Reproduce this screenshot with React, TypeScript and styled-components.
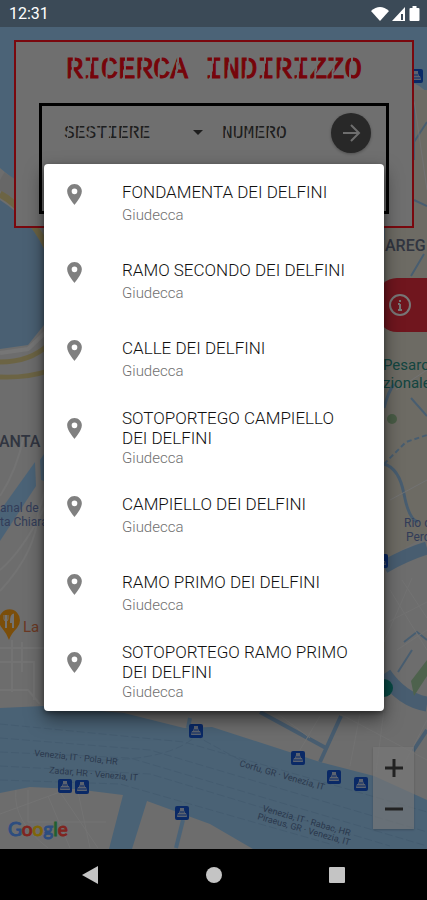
import React from "react";
import styled, { createGlobalStyle, css } from "styled-components";

const GlobalStyle = createGlobalStyle`
  *, *::before, *::after { box-sizing: border-box; }
  body { margin: 0; background: #000; font-family: Roboto, "Liberation Sans", sans-serif; }
  button, input, select { font: inherit; color: inherit; border: 0; padding: 0; margin: 0; background: none; border-radius: 0; }
`;

const Screen = styled.div`
  display: flex;
  flex-direction: column;
  min-height: 100vh;
`;

const StatusBar = styled.header`
  display: flex;
  align-items: center;
  justify-content: space-between;
  height: 27px;
  padding: 0 7px 0 9px;
  background: #3b4a57;
  color: #fff;
  font-size: 16px;
  line-height: 20px;
`;

const StatusIcons = styled.div`
  display: flex;
  align-items: center;
  gap: 2px;
  svg { display: block; }
`;

const Stage = styled.main`
  position: relative;
  display: grid;
  flex: 1;
  overflow: hidden;
`;

const MapLayer = styled.div`
  position: absolute;
  inset: 0;
  svg { display: block; width: 100%; height: 100%; }
`;

const Controls = styled.div`
  grid-area: 1 / 1;
  position: relative;
  display: flex;
  flex-direction: column;
  padding: 13px 13px 0 14px;
`;

const SearchPanel = styled.section`
  display: flex;
  flex-direction: column;
  height: 188px;
  padding: 13px 23px 12px 23px;
  border: 2px solid #f4101c;
  background: #dedede;
`;

const stencil = css`
  position: relative;
  font-family: "Liberation Mono", monospace;
  &::after {
    content: "";
    position: absolute;
    inset: 0;
    pointer-events: none;
    background-image: linear-gradient(97deg, transparent 33%, #dedede 34%, #dedede 43%, transparent 44%);
    background-size: 1ch 100%;
  }
`;

const Title = styled.h1`
  ${stencil}
  align-self: center;
  margin: 0;
  color: #ec0814;
  font-size: 29px;
  font-weight: 400;
  line-height: 32px;
  white-space: nowrap;
  -webkit-text-stroke: 1px #ec0814;
`;

const SearchForm = styled.form`
  display: flex;
  align-items: flex-start;
  flex: 1;
  margin-top: 16px;
  padding: 7px 15px 0 22px;
  border: 3px solid #000;
`;

const StencilField = styled.label<{ $grow?: boolean }>`
  ${stencil}
  display: block;
  flex: ${(p) => (p.$grow ? "1 1 0" : "0 1 88px")};
  min-width: 0;
  margin-top: 8px;
  color: #3c3c3c;
  font-size: 18px;
  line-height: 24px;
`;

const District = styled.select`
  display: block;
  width: 100%;
  height: 24px;
  appearance: none;
  outline: 0;
`;

const HouseNumber = styled.input`
  display: block;
  width: 100%;
  height: 24px;
  outline: 0;
  &::placeholder { color: #3c3c3c; opacity: 1; }
`;

const Caret = styled.svg`
  flex: none;
  margin: 17px 19px 0 41px;
`;

const GoButton = styled.button`
  display: grid;
  place-items: center;
  flex: none;
  width: 40px;
  height: 40px;
  border-radius: 50%;
  background: #505050;
  box-shadow: 0 1px 3px rgba(0, 0, 0, 0.3);
`;

const InfoTab = styled.button`
  display: flex;
  align-items: center;
  align-self: flex-end;
  width: 50px;
  height: 54px;
  margin: 50px -13px 0 0;
  padding-left: 11px;
  border-radius: 20px 0 0 20px;
  background: #e02c3c;
`;

const MapFooter = styled.div`
  display: flex;
  align-items: flex-end;
  justify-content: space-between;
  margin-top: auto;
  margin-left: -6px;
  padding-bottom: 8px;
`;

const Brand = styled.a`
  font-family: Lato, sans-serif;
  font-size: 19px;
  font-weight: 400;
  line-height: 24px;
  text-decoration: none;
`;

const Letter = styled.span<{ $tone: string }>`
  color: ${(p) => p.$tone};
  -webkit-text-stroke: 1px ${(p) => p.$tone};
`;

const ZoomGroup = styled.div`
  display: flex;
  flex-direction: column;
  width: 41px;
  margin-bottom: 12px;
  background: rgba(240, 240, 240, 0.65);
  box-shadow: 0 1px 2px rgba(0, 0, 0, 0.2);
`;

const ZoomButton = styled.button`
  display: grid;
  place-items: center;
  height: 41px;
`;

const Scrim = styled.div`
  grid-area: 1 / 1;
  position: relative;
  display: grid;
  align-items: center;
  padding: 0 43px 1px 44px;
  background: rgba(0, 0, 0, 0.5);
`;

const Dialog = styled.div`
  padding-bottom: 1px;
  border-radius: 4px;
  background: #fff;
  box-shadow: 0 8px 18px rgba(0, 0, 0, 0.5), 0 2px 5px rgba(0, 0, 0, 0.35);
`;

const ResultList = styled.ul`
  margin: 0;
  padding: 0;
  list-style: none;
`;

const ResultButton = styled.button<{ $tall: boolean }>`
  display: flex;
  align-items: flex-start;
  width: 100%;
  min-height: 78px;
  padding: ${(p) => (p.$tall ? "10px" : "18px")} 24px 0 23px;
  text-align: left;
  svg { flex: none; margin-top: ${(p) => (p.$tall ? "10px" : "2px")}; }
`;

const ResultText = styled.span<{ $tall: boolean }>`
  display: flex;
  flex-direction: column;
  gap: ${(p) => (p.$tall ? "0" : "3px")};
  margin-left: 40px;
`;

const Street = styled.span`
  color: #101010;
  font-size: 17px;
  font-weight: 300;
  line-height: 20px;
`;

const Area = styled.span`
  color: #707070;
  font-size: 15px;
  font-weight: 300;
  line-height: 20px;
`;

const NavBar = styled.nav`
  display: grid;
  grid-template-columns: 1fr 1fr 1fr;
  justify-items: center;
  align-items: center;
  height: 51px;
  padding: 0 29px;
  background: #000;
`;

const NavButton = styled.button`
  display: grid;
  place-items: center;
  width: 40px;
  height: 40px;
`;

const results = [
  "FONDAMENTA DEI DELFINI",
  "RAMO SECONDO DEI DELFINI",
  "CALLE DEI DELFINI",
  "SOTOPORTEGO CAMPIELLO DEI DELFINI",
  "CAMPIELLO DEI DELFINI",
  "RAMO PRIMO DEI DELFINI",
  "SOTOPORTEGO RAMO PRIMO DEI DELFINI",
];

const ferryStops = [
  [196, 731], [65, 786], [82, 787], [182, 813], [298, 758], [334, 777], [361, 784], [416, 76], [381, 561],
];

const brand: [string, string][] = [
  ["G", "#5b9bff"], ["o", "#ff4a40"], ["o", "#ffcc10"], ["g", "#5b9bff"], ["l", "#40c060"], ["e", "#ff4a40"],
];

const Pin = () => (
  <svg width="15" height="21" viewBox="5 2 14 20" fill="#808080" aria-hidden="true">
    <path fillRule="evenodd" d="M12 2C8.1 2 5 5.1 5 9c0 5.200 7 13 7 13s7-7.800 7-13c0-3.900-3.100-7-7-7zm0 9.700a2.700 2.700 0 1 1 0-5.400 2.700 2.700 0 0 1 0 5.400z" />
  </svg>
);

const Ferry = ({ x, y }: { x: number; y: number }) => (
  <g transform={`translate(${x - 7} ${y - 7})`}>
    <rect width="14" height="14" rx="2" fill="#1452cc" />
    <path d="M5 2h4v2l1 3h1l1 4H2l1-4h1l1-3z" fill="#b8c6e0" />
    <path d="M5 6h4M3 9h8" stroke="#1452cc" strokeWidth="1" />
  </g>
);

const CityMap = () => (
  <svg viewBox="0 27 427 822" preserveAspectRatio="xMidYMid slice" fontFamily="Roboto, sans-serif" aria-label="Venezia">
    <rect y="27" width="427" height="822" fill="#dadada" />
    <path d="M0 27H427V92Q410 76 390 80V240H50Q35 195 0 168Z" fill="#97c7ef" />
    <path d="M0 180Q36 200 60 270" fill="none" stroke="#cfcfcf" strokeWidth="18" />
    <path d="M0 194Q30 210 54 262" fill="none" stroke="#d9c988" strokeWidth="7" />
    <path d="M0 200Q37 224 48 260V320L28 345 0 349Z" fill="#94c1e7" />
    <path d="M0 353L28 349 48 330" fill="none" stroke="#ececec" strokeWidth="4" />
    <path d="M0 362Q30 362 48 345M0 377Q27 378 48 371" fill="none" stroke="#d9c988" strokeWidth="5" />
    <path d="M0 511L35 462 36 486 0 541Z" fill="#97c7ef" />
    <path d="M40 460L48 448V482L41 480Z" fill="#97c7ef" />
    <g fill="none" stroke="#e6e6e6" strokeWidth="2">
      <path d="M0 496Q17 470 24 435M0 591Q36 552 38 514L48 480M0 570Q24 550 48 500" />
      <path d="M0 662H34V700M12 640V692M0 690H28L40 704M22 642V672M0 648H48" />
      <path d="M16 790Q12 820 48 848M0 814L60 792 98 848M28 790V822H106M48 796L70 848M78 792L90 848" strokeWidth="1" />
    </g>
    <path d="M385 90H427V580L384 650Z" fill="#dad6c9" />
    <path d="M385 560L427 535V720H385Z" fill="#dadada" />
    <g fill="none" stroke="#90bbe0" strokeWidth="3">
      <path d="M414 200L427 206M427 122L414 142M424 254L411 276M414 160V100" strokeWidth="2" />
      <path d="M384 464Q399 468 404 494T418 522M384 408Q388 392 394 384" />
      <path d="M411 398L427 416" strokeWidth="2" />
      <path d="M384 464L406 442 427 435" strokeWidth="2" strokeDasharray="5 3" />
      <path d="M384 567Q407 554 427 548" strokeWidth="13" />
      <path d="M384 674Q402 700 427 704" strokeWidth="15" />
      <path d="M260 712L326 748M341 716L320 762M427 730L413 751" strokeWidth="4" />
      <path d="M404 642L417 632 427 640M398 672L412 650" strokeWidth="2" />
    </g>
    <g fill="none" stroke="#e4e4e4" strokeWidth="1">
      <path d="M390 590L427 650M402 580L427 618M388 622L427 602M384 642L412 578M397 650L427 630M396 390L427 370M390 500L427 480M414 100L427 190" />
      <path d="M340 714L427 760M360 714L350 766M384 710L376 772M320 716L300 750M427 720L398 776M278 714L310 738" />
    </g>
    <circle cx="392" cy="419" r="5" fill="#93b98c" />
    <path d="M411 681L427 660V676L414 696Z" fill="#9cc49a" />
    <circle cx="384" cy="688" r="9" fill="#11958a" />
    <path d="M0 708L44 706 124 713 184 728 212 727 320 762 374 776 427 800V849H253L210 824 147 801 132 849H109L123 795 75 789 30 787 0 793Z" fill="#94c4eb" />
    <g fill="none" stroke="#89b8df" strokeWidth="1" strokeDasharray="8 3">
      <path d="M0 724L184 742 427 812M0 738L150 750 427 832M0 752L130 758 427 846M0 766L150 774 390 846M0 780L120 784 330 844M100 760Q170 760 196 736L240 760" />
    </g>
    <path d="M190 718L188 728M183 820L176 848" stroke="#97c7ef" strokeWidth="4" />
    <g fill="#54729a" fontSize="9">
      <text transform="translate(34 756) rotate(6)">Venezia, IT · Pola, HR</text>
      <text transform="translate(49 773) rotate(5)">Zadar, HR · Venezia, IT</text>
      <text transform="translate(239 766) rotate(16)">Corfu, GR · Venezia, IT</text>
      <text transform="translate(262 811) rotate(16)">Venezia, IT · Rabac, HR</text>
      <text transform="translate(257 819) rotate(16)">Piraeus, GR · Venezia, IT</text>
    </g>
    <g fill="#626b80" fontSize="16" fontWeight="500">
      <text x="-1" y="447">ANTA</text>
      <text x="385" y="251">AREG</text>
    </g>
    <g fill="#6579b1" fontSize="12">
      <text x="0" y="512">anal de</text>
      <text x="0" y="526">ta Chiara</text>
      <text x="404" y="527">Rio di</text>
      <text x="406" y="541">Perdon</text>
    </g>
    <g fill="#268a80" fontSize="15">
      <text x="383" y="370">Pesaro</text>
      <text x="383" y="388">zionale</text>
    </g>
    <path d="M9 640Q7 634 2 628A10.500 11 0 1 1 17 628Q11 634 9 640Z" fill="#f79c15" />
    <path d="M4 615V619Q4 621 6 621T8 619V615" fill="none" stroke="#e4e4e4" strokeWidth="1" />
    <path d="M6 615V628M13 628V615Q11 616 11 622H13" fill="#e4e4e4" stroke="#e4e4e4" strokeWidth="2" />
    <text x="23" y="632" fontSize="15" fill="#d67348">La</text>
    {ferryStops.map(([x, y]) => (
      <Ferry key={`${x}-${y}`} x={x} y={y} />
    ))}
  </svg>
);

export default function App() {
  return (
    <Screen>
      <GlobalStyle />
      <StatusBar>
        <time>12:31</time>
        <StatusIcons>
          <svg width="18" height="16" viewBox="0 0 18 16" fill="#fff" aria-hidden="true">
            <path d="M0 5Q9-3 18 5L9 15Z" />
          </svg>
          <svg width="16" height="16" viewBox="0 0 16 16" aria-hidden="true">
            <path fill="#fff" fillRule="evenodd" d="M1 15L14 1V15ZM10 8V14H12V8Z" />
          </svg>
          <svg width="11" height="16" viewBox="1 0 10 16" fill="#fff" aria-hidden="true">
            <path d="M4 0h4v2h2q1 0 1 1v11q0 1-1 1H2q-1 0-1-1V3q0-1 1-1h2z" />
          </svg>
        </StatusIcons>
      </StatusBar>

      <Stage>
        <MapLayer><CityMap /></MapLayer>
        <Controls>
          <SearchPanel>
            <Title>RICERCA INDIRIZZO</Title>
            <SearchForm onSubmit={(e) => e.preventDefault()}>
              <StencilField>
                <District aria-label="Sestiere" defaultValue="">
                  <option value="">SESTIERE</option>
                  <option value="giudecca">GIUDECCA</option>
                </District>
              </StencilField>
              <Caret width="10" height="6" viewBox="0 0 10 6" fill="#3c3c3c" aria-hidden="true">
                <path d="M0 0h10L5 5z" />
              </Caret>
              <StencilField $grow>
                <HouseNumber aria-label="Numero" placeholder="NUMERO" />
              </StencilField>
              <GoButton type="submit" aria-label="Cerca">
                <svg width="20" height="20" viewBox="0 0 20 20" fill="none" stroke="#ddd" strokeWidth="2" aria-hidden="true">
                  <path d="M2 10H17M10 2L18 10 10 18" />
                </svg>
              </GoButton>
            </SearchForm>
          </SearchPanel>
          <InfoTab type="button" aria-label="Informazioni">
            <svg width="24" height="24" viewBox="0 0 24 24" fill="none" stroke="#eee" strokeWidth="2" aria-hidden="true">
              <circle cx="12" cy="12" r="10" />
              <path d="M12 11V17M12 7V9M10 11H12M10 17H14" />
            </svg>
          </InfoTab>
          <MapFooter>
            <Brand href="#google" aria-label="Google">
              {brand.map(([char, tone], i) => (
                <Letter key={i} $tone={tone}>{char}</Letter>
              ))}
            </Brand>
            <ZoomGroup>
              <ZoomButton type="button" aria-label="Zoom avanti">
                <svg width="18" height="18" viewBox="0 0 18 18" stroke="#444" strokeWidth="3" aria-hidden="true"><path d="M0 9H18M9 0V18" /></svg>
              </ZoomButton>
              <ZoomButton type="button" aria-label="Zoom indietro">
                <svg width="18" height="18" viewBox="0 0 18 18" stroke="#444" strokeWidth="3" aria-hidden="true"><path d="M0 9H18" /></svg>
              </ZoomButton>
            </ZoomGroup>
          </MapFooter>
        </Controls>

        <Scrim>
          <Dialog role="dialog" aria-label="Risultati">
            <ResultList>
              {results.map((street) => {
                const tall = street.length > 26;
                return (
                  <li key={street}>
                    <ResultButton type="button" $tall={tall}>
                      <Pin />
                      <ResultText $tall={tall}>
                        <Street>{street}</Street>
                        <Area>Giudecca</Area>
                      </ResultText>
                    </ResultButton>
                  </li>
                );
              })}
            </ResultList>
          </Dialog>
        </Scrim>
      </Stage>

      <NavBar>
        <NavButton type="button" aria-label="Indietro">
          <svg width="18" height="20" viewBox="0 0 18 20" fill="#c4c4c4"><path d="M16 1V19L0 10Z" /></svg>
        </NavButton>
        <NavButton type="button" aria-label="Home">
          <svg width="18" height="18" viewBox="0 0 18 18" fill="#c4c4c4"><circle cx="9" cy="9" r="8" /></svg>
        </NavButton>
        <NavButton type="button" aria-label="Recenti">
          <svg width="18" height="18" viewBox="0 0 18 18" fill="#c4c4c4"><rect x="1" y="1" width="16" height="16" rx="1" /></svg>
        </NavButton>
      </NavBar>
    </Screen>
  );
}
